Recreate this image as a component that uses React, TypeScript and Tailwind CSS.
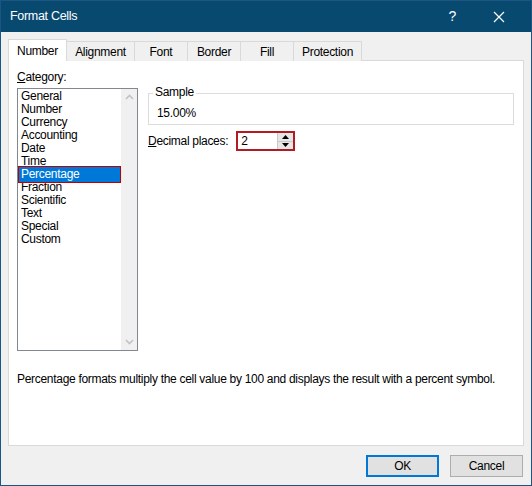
import React from "react";

const CATEGORIES = [
  "General",
  "Number",
  "Currency",
  "Accounting",
  "Date",
  "Time",
  "Percentage",
  "Fraction",
  "Scientific",
  "Text",
  "Special",
  "Custom",
];

const TABS = [
  { label: "Number", w: "w-[59px]" },
  { label: "Alignment", w: "w-[68px]" },
  { label: "Font", w: "w-[53px]" },
  { label: "Border", w: "w-[53px]" },
  { label: "Fill", w: "w-[53px]" },
  { label: "Protection", w: "w-[68px]" },
];

export default function App() {
  return (
    <div className="w-[532px] h-[486px] bg-[#f0f0f0] border border-[#1d5582] flex flex-col font-['Liberation_Sans',Arial,sans-serif] text-[12px] tracking-[-0.3px] text-black leading-[13px]">
      {/* Title bar */}
      <div className="h-[31px] bg-[#08496f] flex items-center text-white shrink-0">
        <span className="ml-[9px] text-[12.5px]">Format Cells</span>
        <span className="ml-auto text-[14px] mr-[37px]">?</span>
        <svg width="12" height="12" viewBox="0 0 12 12" className="mr-[26px]">
          <path d="M1 1 L11 11 M11 1 L1 11" stroke="white" strokeWidth="1.2" />
        </svg>
      </div>

      {/* Body */}
      <div className="flex-1 flex flex-col pt-[7px] px-[7px]">
        {/* Tabs */}
        <div className="flex items-end h-[22px] relative z-10 -mb-px">
          {TABS.map((t, i) =>
            i === 0 ? (
              <div
                key={t.label}
                className={`${t.w} h-[22px] bg-white border border-b-0 border-[#d9d9d9] flex items-center justify-center pt-[1px]`}
              >
                {t.label}
              </div>
            ) : (
              <div
                key={t.label}
                className={`${t.w} h-[20px] bg-[#f0f0f0] border border-l-0 border-b-0 border-[#d9d9d9] flex items-center justify-center pt-[2px]`}
              >
                {t.label}
              </div>
            )
          )}
        </div>

        {/* Panel */}
        <div className="h-[386px] bg-white border border-[#d9d9d9] flex flex-col pl-[8px] pr-[9px] pt-[9px]">
          <div className="flex gap-[10px]">
            {/* Category list */}
            <div className="w-[121px] flex flex-col">
              <div className="h-[15px] mb-[3px] flex items-center">
                <span>
                  <span className="underline">C</span>ategory:
                </span>
              </div>
              <div className="h-[263px] border border-[#828790] flex">
                <div className="flex-1 flex flex-col pt-[1px]">
                  {CATEGORIES.map((c) =>
                    c === "Percentage" ? (
                      <div key={c} className="h-[13px] relative flex items-center pl-[3px]">
                        <span className="absolute left-0 right-0 -top-[2px] -bottom-[2px] bg-[#0078d7] border border-[#c00000]" />
                        <span className="relative text-white">{c}</span>
                      </div>
                    ) : (
                      <div key={c} className="h-[13px] flex items-center pl-[3px]">
                        {c}
                      </div>
                    )
                  )}
                </div>
                <div className="w-[16px] bg-[#f0f0f0] flex flex-col items-center justify-between py-[5px]">
                  <svg width="9" height="6" viewBox="0 0 9 6">
                    <path d="M1 5 L4.5 1.5 L8 5" stroke="#c2c2c2" strokeWidth="1.6" fill="none" />
                  </svg>
                  <svg width="9" height="6" viewBox="0 0 9 6">
                    <path d="M1 1 L4.5 4.5 L8 1" stroke="#c2c2c2" strokeWidth="1.6" fill="none" />
                  </svg>
                </div>
              </div>
            </div>

            {/* Right side */}
            <div className="flex-1 flex flex-col">
              <div className="mt-[23px] h-[32px] border border-[#dcdcdc] relative flex items-end pl-[8px] pb-[4px]">
                <span className="absolute -top-[8px] left-[4px] bg-white px-[2px]">Sample</span>
                <span>15.00%</span>
              </div>
              <div className="mt-[6px] flex items-center">
                <span>
                  <span className="underline">D</span>ecimal places:
                </span>
                <div className="ml-[8px] w-[59px] h-[20px] border-2 border-[#b01c22] flex items-stretch">
                  <span className="flex-1 flex items-center pl-[3px]">2</span>
                  <div className="w-[16px] flex flex-col bg-[#e6e6e6] border-l border-[#c9c9c9]">
                    <div className="flex-1 flex items-center justify-center border-b border-[#c9c9c9]">
                      <svg width="7" height="4" viewBox="0 0 7 4">
                        <path d="M0 4 L3.5 0 L7 4 Z" fill="#000" />
                      </svg>
                    </div>
                    <div className="flex-1 flex items-center justify-center">
                      <svg width="7" height="4" viewBox="0 0 7 4">
                        <path d="M0 0 L3.5 4 L7 0 Z" fill="#000" />
                      </svg>
                    </div>
                  </div>
                </div>
              </div>
            </div>
          </div>

          <div className="mt-[22px] whitespace-nowrap">
            Percentage formats multiply the cell value by 100 and displays the result with a percent symbol.
          </div>
        </div>

        {/* Buttons */}
        <div className="flex justify-end gap-[11px] mt-[9px] pr-[1px]">
          <button className="w-[73px] h-[22px] bg-[#e1e1e1] border-2 border-[#0078d7] flex items-center justify-center">
            OK
          </button>
          <button className="w-[73px] h-[22px] bg-[#e1e1e1] border border-[#adadad] flex items-center justify-center">
            Cancel
          </button>
        </div>
      </div>
    </div>
  );
}
